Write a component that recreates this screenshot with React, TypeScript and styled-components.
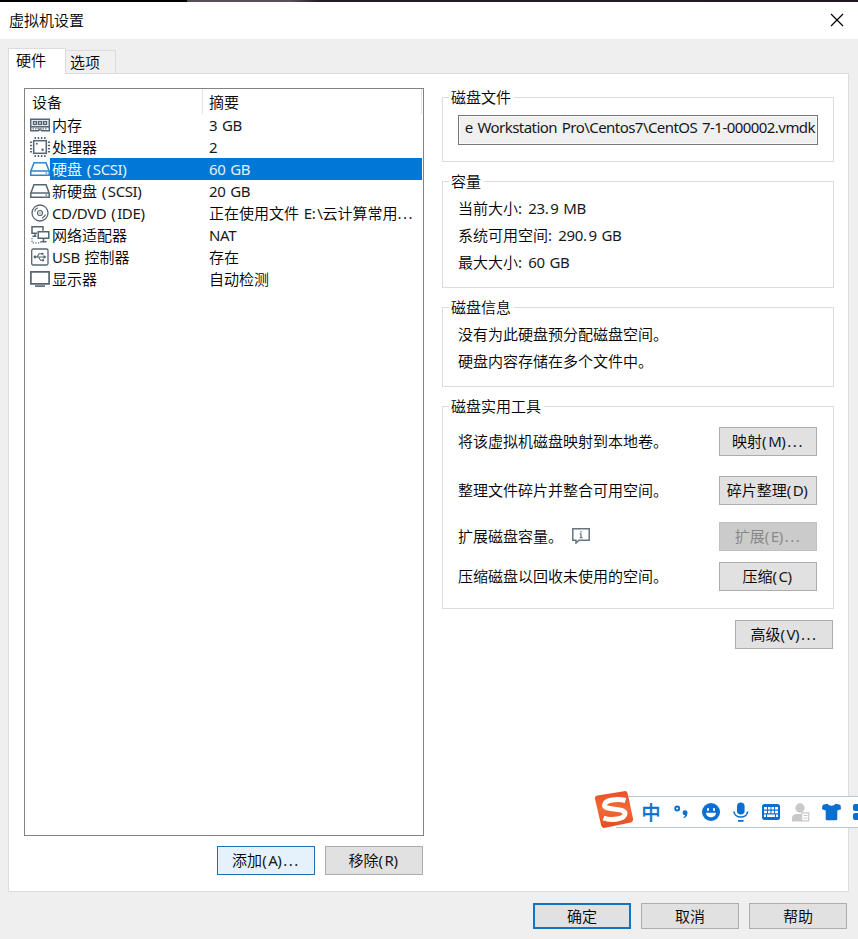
import React from "react";
import styled, { createGlobalStyle, css } from "styled-components";

const GlobalStyle = createGlobalStyle`
  * { box-sizing: border-box; }
  html, body { margin: 0; padding: 0; overflow: hidden; }
  body {
    font-family: "Noto Sans CJK SC", "Noto Sans", sans-serif;
    font-size: 15px;
    font-weight: 350;
    color: #000;
  }
`;

const line = "#dcdcdc";
const slate = "#566573";

/* ---------- text ---------- */

const Latin = styled.span`
  font-family: "Noto Sans", sans-serif;
  font-size: 15px;
  font-weight: 400;
  letter-spacing: -0.4px;
  word-spacing: 1.3px;
  white-space: pre;
  opacity: 0.9;
`;

const Punctuation = styled(Latin)`
  letter-spacing: 1.5px;
`;

const Label = ({ children }: { children: string }) => (
  <>
    {children
      .split(/([():.]+|[\x20-\x27\x2a-\x2d\x2f-\x39\x3b-\x7e]+)/)
      .filter(Boolean)
      .map((run, i) => {
        if (/^[():.]/.test(run)) return <Punctuation key={i}>{run}</Punctuation>;
        if (/^[\x20-\x7e]/.test(run)) return <Latin key={i}>{run}</Latin>;
        return <React.Fragment key={i}>{run}</React.Fragment>;
      })}
  </>
);

/* ---------- window ---------- */

const Window = styled.div`
  position: relative;
  width: 858px;
  height: 939px;
  display: flex;
  flex-direction: column;
  background: #efefef;
  overflow: hidden;
`;

const DesktopEdge = styled.div`
  flex: 0 0 2px;
  background: linear-gradient(90deg, #000 0 187px, #5a4d5c 187px 290px, #231c27 320px 620px, #1e1722 100%);
`;

const TitleBar = styled.header`
  flex: 0 0 37px;
  display: flex;
  align-items: center;
  justify-content: space-between;
  padding: 0 14px 1px 9px;
  background: #fff;
`;

const Title = styled.h1`
  margin: 0;
  font-size: 15px;
  font-weight: 350;
  line-height: 20px;
`;

const CloseButton = styled.button`
  display: flex;
  padding: 0;
  border: 0;
  background: none;
`;

const Tabs = styled.nav`
  flex: 0 0 25px;
  margin: 9px 0 0 8px;
  display: flex;
  align-items: flex-end;
`;

const Tab = styled.div<{ $active?: boolean }>`
  border: 1px solid ${line};
  border-bottom: 0;
  line-height: 22px;
  ${(p) =>
    p.$active
      ? css`
          position: relative;
          z-index: 1;
          width: 58px;
          height: 26px;
          margin-bottom: -1px;
          padding-left: 7px;
          background: #fff;
        `
      : css`
          width: 51px;
          height: 23px;
          margin-left: -1px;
          padding-left: 4px;
          background: #f0f0f0;
        `}
`;

const Panel = styled.main`
  flex: 0 0 819px;
  width: 841px;
  margin-left: 8px;
  padding: 14px 14px 0 15px;
  display: flex;
  gap: 18px;
  border: 1px solid ${line};
  background: #fff;
`;

const DeviceColumn = styled.section`
  width: 400px;
`;

const DetailColumn = styled.section`
  width: 392px;
  display: flex;
  flex-direction: column;
  gap: 10px;
`;

/* ---------- device list ---------- */

const DeviceList = styled.div`
  height: 748px;
  padding-right: 1px;
  border: 1px solid #828282;
`;

const ListHeader = styled.div`
  display: grid;
  grid-template-columns: 178px 1fr;
  height: 25px;
  line-height: 25px;
`;

const HeaderCell = styled.div`
  padding-left: 6px;
  border-right: 1px solid #e2e2e2;
  &:first-child { padding-left: 7px; }
`;

const DeviceRow = styled.div`
  display: grid;
  grid-template-columns: 20px 1fr;
  height: 22px;
  padding-left: 5px;
`;

const DeviceCells = styled.div<{ $selected?: boolean }>`
  display: grid;
  grid-template-columns: 157px 1fr;
  padding-left: 2px;
  line-height: 22px;
  white-space: nowrap;
  background: ${(p) => (p.$selected ? "#0078d7" : "transparent")};
  color: ${(p) => (p.$selected ? "#fff" : "#000")};
`;

const ButtonRow = styled.div`
  display: flex;
  justify-content: flex-end;
  gap: 10px;
  margin-top: 10px;
  padding-right: 1px;
`;

const PushButton = styled.button<{ $tone?: "default" | "hot" }>`
  width: 98px;
  height: 29px;
  padding: 0 0 2px;
  display: flex;
  align-items: center;
  justify-content: center;
  flex: none;
  font: inherit;
  line-height: 20px;
  color: #000;
  background: #e1e1e1;
  border: 1px solid #adadad;
  ${(p) => p.$tone === "hot" && css`background: #e5f1fb; border-color: #1a70bc;`}
  ${(p) => p.$tone === "default" && css`border: 2px solid #1673be;`}
  &:disabled {
    color: #848484;
    background: #cbcbcb;
    border-color: #c0c0c0;
  }
`;

/* ---------- detail groups ---------- */

const Group = styled.fieldset<{ $h: number }>`
  height: ${(p) => p.$h}px;
  min-width: 0;
  margin: 0;
  padding: 0 15px 0 6px;
  border: 1px solid ${line};
`;

const Legend = styled.legend`
  height: 19px;
  padding: 0 3px 0 2px;
  line-height: 17px;
`;

const GroupBody = styled.div<{ $top: number }>`
  padding: ${(p) => p.$top}px 0 0 9px;
`;

const PathField = styled.div`
  width: 360px;
  height: 30px;
  padding: 0 2px 0 4px;
  display: flex;
  justify-content: flex-end;
  overflow: hidden;
  border: 1px solid #777;
  outline: 1px solid #fafafa;
  outline-offset: -2px;
  background: #f0f0f0;
  line-height: 23px;
`;

const PathText = styled(Latin)`
  letter-spacing: -0.55px;
  word-spacing: 1.5px;
`;

const InfoLine = styled.div`
  height: 27px;
  line-height: 25px;
  white-space: nowrap;
`;

const ToolRow = styled.div<{ $gap?: number }>`
  height: 29px;
  margin-bottom: ${(p) => p.$gap ?? 0}px;
  padding-right: 1px;
  display: flex;
  align-items: center;
  justify-content: space-between;
`;

const ToolText = styled.span`
  display: flex;
  align-items: center;
  gap: 9px;
  padding-bottom: 2px;
`;

const AdvancedRow = styled.div`
  display: flex;
  justify-content: flex-end;
  padding: 1px 1px 0 0;
`;

const Footer = styled.footer`
  display: flex;
  justify-content: flex-end;
  gap: 10px;
  padding: 11px 11px 0 0;
  ${PushButton} { height: 26px; padding-bottom: 1px; }
`;

/* ---------- input method bar (floats over the dialog) ---------- */

const ImeBar = styled.aside`
  position: absolute;
  left: 594px;
  top: 790px;
  width: 264px;
  height: 40px;
  display: flex;
  align-items: center;
  overflow: hidden;
`;

const ImeStrip = styled.div`
  flex: none;
  display: flex;
  width: 264px;
  height: 32px;
  margin: 4px 0 0 -18px;
  padding-left: 20px;
  border: solid #b7c6d8;
  border-width: 1px 0;
  background: #fff;
`;

const ImeLogo = styled.svg`
  flex: none;
  position: relative;
  z-index: 1;
`;

const ImeCell = styled.div`
  flex: 0 0 30px;
  display: flex;
  align-items: center;
  justify-content: center;
  font-size: 19px;
  font-weight: 400;
  line-height: 28px;
  color: #0b6fd0;
  -webkit-text-stroke: 0.6px #0b6fd0;
`;

/* ---------- drawings ---------- */

const Glyph = ({ children, color = slate }: { children: React.ReactNode; color?: string }) => (
  <svg width="20" height="22" viewBox="0 0 20 22" fill="none" stroke={color} strokeWidth="1.5">
    {children}
  </svg>
);

const MemoryIcon = () => (
  <Glyph>
    <path d="M.7 5.300h18.600v9.200h-5.600l-1.800 2.200H8.300l-1.800-2.200H.7z" fill="#e6ebef" stroke="none" />
    <path d="M.7 5.300h18.600v7.500H.7z" strokeWidth="1.400" />
    <path d="M3.500 7.600h3v2.700h-3zM8.500 7.600h3v2.700h-3zM13.500 7.600h3v2.700h-3z" strokeWidth="1.300" />
    <path d="M.7 12.500v4.200h7.600l1.700-1.800 1.700 1.800h7.600v-4.200" strokeWidth="1.400" />
    <path d="M2.500 14.600h15" strokeDasharray="1.500 1" strokeWidth="1.600" stroke="#8a96a0" />
  </Glyph>
);

const CpuIcon = () => (
  <Glyph>
    <rect x="3.700" y="4.700" width="12.600" height="12.600" />
    <path d="M4.500 2h11.500M4.500 20h11.500M1 5.500V17M19 5.500V17" strokeDasharray="1.500 1.700" strokeWidth="2.200" />
    <circle cx="6.800" cy="7.800" r="1" fill={slate} stroke="none" />
    <circle cx="12.600" cy="13.700" r="1.200" fill={slate} stroke="none" />
  </Glyph>
);

const DiskIcon = ({ color }: { color?: string }) => (
  <Glyph color={color}>
    <path d="M.8 13.200 4 4.800h12l3.200 8.400v4.100H.8z" />
    <path d="M.8 13h18.400M15.500 15.200h1.700" strokeWidth="1.300" />
  </Glyph>
);

const DiscIcon = () => (
  <Glyph>
    <circle cx="10" cy="11" r="8" strokeWidth="1.300" />
    <circle cx="10" cy="11" r="2.500" strokeWidth="1.200" />
    <circle cx="10" cy="11" r=".7" fill={slate} stroke="none" />
    <path d="M4.600 9.500A5.600 5.600 0 0 1 8 5.800M15.400 12.500A5.600 5.600 0 0 1 12 16.200" strokeWidth="1.100" />
  </Glyph>
);

const NetworkIcon = () => (
  <Glyph>
    <path d="M7 9.200H2V2.700h11v4" />
    <path d="M8.200 7.700h10.600v6.500H8.200zM13.500 14.500v3M10.500 17.800h6" />
    <path d="M5 9.500V12M2.500 12.200h4" strokeWidth="1.400" />
    <path d="M2 14v4.800h9" strokeDasharray="1.200 1.500" strokeWidth="1.200" />
  </Glyph>
);

const UsbIcon = () => (
  <Glyph>
    <rect x="1.700" y="3" width="16.300" height="16" rx="1.500" strokeWidth="1.300" />
    <path d="M4.500 11h10M7 11l2-3.200h3M8.500 11l2 3.200h2.500" strokeWidth="1.100" />
    <circle cx="5" cy="11" r="1.400" fill={slate} stroke="none" />
    <path d="m13.500 9 3 2-3 2zM11.500 6.800h2v2h-2zM12 13.200h2v2h-2z" fill={slate} stroke="none" />
  </Glyph>
);

const DisplayIcon = () => (
  <Glyph>
    <path d="M.9 3.900h18.200v12H.9z" strokeWidth="1.700" />
    <path d="M5 18.100h10" strokeWidth="1.600" />
  </Glyph>
);

const InfoIcon = () => (
  <svg width="18" height="16" viewBox="0 0 18 16" fill="none" stroke="#66747f">
    <path d="M.8.8h16.400v11.400H7L4 15v-2.800H.8z" strokeWidth="1.500" />
    <path d="M9 3v1.500M9 5.500v4.300M7.700 5.800H9M7.700 9.700h2.800" strokeWidth="1.200" />
  </svg>
);

const blue = "#0b6fd0";

const SogouMark = () => (
  <ImeLogo width="40" height="40" viewBox="0 0 40 40">
    <defs>
      <linearGradient id="ember" x1="0" y1="0" x2="0" y2="1">
        <stop offset="0" stopColor="#e9512a" />
        <stop offset=".5" stopColor="#f26a35" />
        <stop offset="1" stopColor="#e64b20" />
      </linearGradient>
    </defs>
    <path d="M3.500 5.500 30 1.200q3-.5 3.700 2.300l5.300 25q.5 3-2.300 3.900L11 37.800q-3 .7-3.800-2.200L1 9q-.6-2.900 2.500-3.500z" fill="url(#ember)" />
    <path
      d="M31.500 10.500C24 8.500 10.500 9.500 10.500 15.200c0 5.500 20.500 2.300 20.500 8.300 0 5.500-13.500 7.500-21.500 4.500"
      fill="none"
      stroke="#fff"
      strokeWidth="5"
    />
  </ImeLogo>
);

const PunctuationIcon = () => (
  <svg width="16" height="16" viewBox="0 0 16 16" fill={blue}>
    <circle cx="4.200" cy="4.500" r="2" fill="none" stroke={blue} strokeWidth="1.900" />
    <path d="M12 6.300a2.500 2.500 0 0 1 2.500 2.500c0 2.700-1.300 4.500-3.500 5.500l-.7-1c1.100-.6 1.500-1.200 1.700-2.100A2.400 2.400 0 0 1 12 6.300z" />
  </svg>
);

const SmileIcon = () => (
  <svg width="18" height="18" viewBox="0 0 18 18">
    <circle cx="9" cy="9" r="9" fill={blue} />
    <path d="M4 9.800h10c0 6-10 6-10 0zM5 5.200h2v2.500H5zM11 5.200h2v2.500h-2z" fill="#fff" />
  </svg>
);

const MicIcon = () => (
  <svg width="16" height="20" viewBox="0 0 16 20" fill="none" stroke={blue} strokeWidth="1.700">
    <rect x="4" y=".5" width="7.600" height="12" rx="3.800" fill={blue} stroke="none" />
    <path d="M1 9.500c.4 7.300 13.200 7.300 13.600 0M5 18.900h5.600" />
  </svg>
);

const KeyboardIcon = () => (
  <svg width="18" height="16" viewBox="0 0 18 16">
    <rect width="18" height="16" rx="2.500" fill={blue} />
    <path d="M2 3h3v2.500H2zM6 3h2.500v2.500H6zM9.500 3H12v2.500H9.500zM13 3h3v2.500h-3zM2 6.700h3v2.500H2zM6 6.700h2.500v2.500H6zM9.500 6.700H12v2.500H9.500zM13 6.700h3v2.500h-3zM2 10.500h2v2.500H2zM5 10.500h8v2.500H5zM14 10.500h2v2.500h-2z" fill="#fff" />
  </svg>
);

const PersonIcon = () => (
  <svg width="18" height="19" viewBox="0 0 18 19" fill="#c9c9c9">
    <circle cx="8" cy="5" r="4.700" />
    <path d="M0 18.500v-3.500c0-2.500 2-4 5-4h5v7.500z" />
    <path d="M9.700 9.900h7v8h-7z" fill="#fff" stroke="#c9c9c9" strokeWidth="1.200" />
    <path d="M11.500 12.500h4M11.500 15h4" stroke="#c9c9c9" strokeWidth="1.200" />
  </svg>
);

const ShirtIcon = () => (
  <svg width="19" height="18" viewBox="0 0 19 18" fill={blue}>
    <path d="M5.500.7c1.500 2.600 6.500 2.600 8 0l3.700.7q1.300.4 1.500 1.600l.3 3.300-3.700 1.200v8.500q0 1.300-1.300 1.300H5q-1.300 0-1.300-1.300V7.500L0 6.300.3 3q.2-1.200 1.500-1.600z" />
  </svg>
);

const AppsIcon = () => (
  <svg width="16" height="16" viewBox="0 0 16 16" fill={blue}>
    <rect width="7" height="7" rx="2" />
    <rect y="9" width="7" height="7" rx="2" />
    <rect x="9" width="7" height="7" rx="2" />
    <rect x="9" y="9" width="7" height="7" rx="2" />
  </svg>
);

/* ---------- data ---------- */

const devices = [
  { icon: <MemoryIcon />, name: "内存", summary: "3 GB" },
  { icon: <CpuIcon />, name: "处理器", summary: "2" },
  { icon: <DiskIcon color="#2a86cf" />, name: "硬盘 (SCSI)", summary: "60 GB", selected: true },
  { icon: <DiskIcon />, name: "新硬盘 (SCSI)", summary: "20 GB" },
  { icon: <DiscIcon />, name: "CD/DVD (IDE)", summary: "正在使用文件 E:\\云计算常用..." },
  { icon: <NetworkIcon />, name: "网络适配器", summary: "NAT" },
  { icon: <UsbIcon />, name: "USB 控制器", summary: "存在" },
  { icon: <DisplayIcon />, name: "显示器", summary: "自动检测" },
];

const tools = [
  { text: "将该虚拟机磁盘映射到本地卷。", action: "映射(M)...", gap: 20 },
  { text: "整理文件碎片并整合可用空间。", action: "碎片整理(D)", gap: 17 },
  { text: "扩展磁盘容量。", action: "扩展(E)...", gap: 11, info: true, disabled: true },
  { text: "压缩磁盘以回收未使用的空间。", action: "压缩(C)", gap: 0 },
];

export default function App() {
  return (
    <>
      <GlobalStyle />
      <Window>
        <DesktopEdge />
        <TitleBar>
          <Title>虚拟机设置</Title>
          <CloseButton aria-label="关闭">
            <svg width="14" height="14" viewBox="0 0 14 14" stroke="#000" strokeWidth="1.200">
              <path d="m1 1 12 12M13 1 1 13" />
            </svg>
          </CloseButton>
        </TitleBar>
        <Tabs>
          <Tab $active>硬件</Tab>
          <Tab>选项</Tab>
        </Tabs>
        <Panel>
          <DeviceColumn>
            <DeviceList>
              <ListHeader>
                <HeaderCell>设备</HeaderCell>
                <HeaderCell>摘要</HeaderCell>
              </ListHeader>
              {devices.map((d) => (
                <DeviceRow key={d.name}>
                  {d.icon}
                  <DeviceCells $selected={d.selected}>
                    <span><Label>{d.name}</Label></span>
                    <span><Label>{d.summary}</Label></span>
                  </DeviceCells>
                </DeviceRow>
              ))}
            </DeviceList>
            <ButtonRow>
              <PushButton $tone="hot"><Label>添加(A)...</Label></PushButton>
              <PushButton><Label>移除(R)</Label></PushButton>
            </ButtonRow>
          </DeviceColumn>
          <DetailColumn>
            <Group $h={74}>
              <Legend>磁盘文件</Legend>
              <GroupBody $top={8}>
                <PathField>
                  <PathText>{"e Workstation Pro\\Centos7\\CentOS 7-1-000002.vmdk"}</PathText>
                </PathField>
              </GroupBody>
            </Group>
            <Group $h={116}>
              <Legend>容量</Legend>
              <GroupBody $top={4}>
                <InfoLine><Label>当前大小: 23.9 MB</Label></InfoLine>
                <InfoLine><Label>系统可用空间: 290.9 GB</Label></InfoLine>
                <InfoLine><Label>最大大小: 60 GB</Label></InfoLine>
              </GroupBody>
            </Group>
            <Group $h={89}>
              <Legend>磁盘信息</Legend>
              <GroupBody $top={4}>
                <InfoLine>没有为此硬盘预分配磁盘空间。</InfoLine>
                <InfoLine>硬盘内容存储在多个文件中。</InfoLine>
              </GroupBody>
            </Group>
            <Group $h={212}>
              <Legend>磁盘实用工具</Legend>
              <GroupBody $top={11}>
                {tools.map((t) => (
                  <ToolRow key={t.action} $gap={t.gap}>
                    <ToolText>
                      {t.text}
                      {t.info && <InfoIcon />}
                    </ToolText>
                    <PushButton disabled={t.disabled}><Label>{t.action}</Label></PushButton>
                  </ToolRow>
                ))}
              </GroupBody>
            </Group>
            <AdvancedRow>
              <PushButton><Label>高级(V)...</Label></PushButton>
            </AdvancedRow>
          </DetailColumn>
        </Panel>
        <Footer>
          <PushButton $tone="default">确定</PushButton>
          <PushButton>取消</PushButton>
          <PushButton>帮助</PushButton>
        </Footer>
        <ImeBar>
          <SogouMark />
          <ImeStrip>
            <ImeCell>中</ImeCell>
            <ImeCell><PunctuationIcon /></ImeCell>
            <ImeCell><SmileIcon /></ImeCell>
            <ImeCell><MicIcon /></ImeCell>
            <ImeCell><KeyboardIcon /></ImeCell>
            <ImeCell><PersonIcon /></ImeCell>
            <ImeCell><ShirtIcon /></ImeCell>
            <ImeCell><AppsIcon /></ImeCell>
          </ImeStrip>
        </ImeBar>
      </Window>
    </>
  );
}
